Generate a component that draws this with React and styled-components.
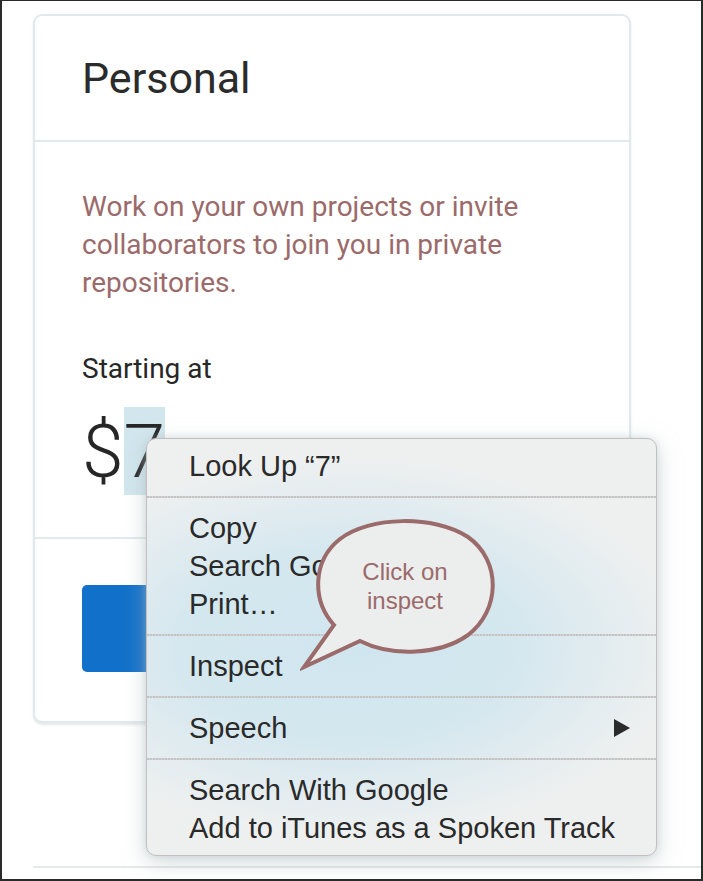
import React from "react";
import styled, { createGlobalStyle } from "styled-components";

const Global = createGlobalStyle`
  html, body { margin: 0; padding: 0; background: #ffffff; }
  * { box-sizing: border-box; }
`;

const Frame = styled.div`
  position: relative;
  width: 703px;
  height: 881px;
  border: 2px solid #2a2a2a;
  border-top-width: 1px;
  background: #ffffff;
  overflow: hidden;
  padding: 13px 0 0 31px;
  display: flex;
  flex-direction: column;
  font-family: Roboto, "Liberation Sans", sans-serif;
`;

const Card = styled.section`
  width: 598px;
  border: 2px solid #e2e9eb;
  border-radius: 9px;
  background: #fff;
  box-shadow: 0 2px 2px rgba(200, 215, 218, 0.5);
`;

const CardHeader = styled.header`
  height: 126px;
  display: flex;
  align-items: center;
  padding: 0 0 0 47px;
  border-bottom: 2px solid #e2e9eb;
`;

const Title = styled.h2`
  margin: 0;
  font-size: 43px;
  font-weight: 400;
  color: #2b2b2b;
  line-height: 1;
`;

const CardBody = styled.div`
  padding: 46px 47px 42px;
  border-bottom: 2px solid #e2e9eb;
`;

const Description = styled.p`
  margin: 0;
  font-size: 28px;
  line-height: 38px;
  color: #9b6a6a;
`;

const Starting = styled.p`
  margin: 48px 0 0;
  font-size: 28px;
  line-height: 38px;
  color: #262626;
`;

const Price = styled.div`
  margin-top: 19px;
  font-size: 75px;
  font-weight: 300;
  line-height: normal;
  color: #262626;
  display: flex;
`;

const Selected = styled.span`
  background: #d2e6ee;
`;

const CardFooter = styled.div`
  padding: 46px 47px 46px;
`;

const BuyButton = styled.button`
  width: 100%;
  height: 87px;
  border: none;
  border-radius: 5px;
  background: #1170c9;
`;

const BottomRule = styled.div`
  margin-top: 143px;
  height: 2px;
  background: #e6e9e9;
`;

const Menu = styled.div`
  position: absolute;
  left: 144px;
  top: 437px;
  width: 511px;
  height: 418px;
  border: 1.5px solid #c3bfbf;
  border-radius: 10px;
  background:
    radial-gradient(ellipse 330px 190px at 40% 50%, rgba(208, 230, 239, 1) 0%, rgba(211, 231, 239, 0.95) 50%, rgba(238, 240, 240, 0) 100%),
    #eef0f0;
  box-shadow: 0 6px 22px rgba(170, 185, 190, 0.55), 0 0 6px rgba(170, 185, 190, 0.35);
  display: flex;
  flex-direction: column;
  font-family: "Liberation Sans", Arial, sans-serif;
  font-size: 29px;
  color: #2a2a2a;
  overflow: hidden;
`;

const Group = styled.div`
  padding: ${(p) => (p.$first ? "8px" : "11px")} 0 ${(p) => (p.$last ? "8px" : "11px")};
`;

const Separator = styled.div`
  height: 2px;
  background: repeating-linear-gradient(90deg, #c4c4c4 0 2px, #d4d4d4 2px 3px);
`;

const Item = styled.div`
  height: 38px;
  display: flex;
  align-items: center;
  justify-content: space-between;
  padding: 0 26px 0 42px;
  white-space: nowrap;
`;

const Arrow = styled.span`
  width: 0;
  height: 0;
  border-top: 9px solid transparent;
  border-bottom: 9px solid transparent;
  border-left: 16px solid #2a2a2a;
`;

const Bubble = styled.div`
  position: absolute;
  left: 298px;
  top: 516px;
  width: 200px;
  height: 154px;
`;

const BubbleText = styled.div`
  position: absolute;
  left: 10px;
  top: 40px;
  width: 190px;
  text-align: center;
  font-family: "Liberation Sans", Arial, sans-serif;
  font-size: 24px;
  line-height: 29px;
  color: #9b6a6a;
`;

export default function App() {
  return (
    <>
      <Global />
      <Frame>
        <Card>
          <CardHeader>
            <Title>Personal</Title>
          </CardHeader>
          <CardBody>
            <Description>
              Work on your own projects or invite collaborators to join you in private repositories.
            </Description>
            <Starting>Starting at</Starting>
            <Price>
              <span>$</span>
              <Selected>7</Selected>
            </Price>
          </CardBody>
          <CardFooter>
            <BuyButton aria-label="Choose Personal" />
          </CardFooter>
        </Card>
        <BottomRule />

        <Menu>
          <Group $first>
            <Item>Look Up “7”</Item>
          </Group>
          <Separator />
          <Group>
            <Item>Copy</Item>
            <Item>Search Google for “7”</Item>
            <Item>Print…</Item>
          </Group>
          <Separator />
          <Group>
            <Item>Inspect</Item>
          </Group>
          <Separator />
          <Group>
            <Item>
              Speech
              <Arrow />
            </Item>
          </Group>
          <Separator />
          <Group $last>
            <Item>Search With Google</Item>
            <Item>Add to iTunes as a Spoken Track</Item>
          </Group>
        </Menu>

        <Bubble>
          <svg width="200" height="154" viewBox="0 0 200 154">
            <path
              d="M34 108 C 12 84, 12 44, 40 22 C 70 -1, 134 -2, 168 20 C 202 44, 200 94, 168 118 C 140 138, 92 140, 60 124 L 4 150 Z"
              fill="#eceeee"
              stroke="#9b6a6a"
              strokeWidth="4"
              strokeLinejoin="miter"
            />
          </svg>
          <BubbleText>
            Click on
            <br />
            inspect
          </BubbleText>
        </Bubble>
      </Frame>
    </>
  );
}
